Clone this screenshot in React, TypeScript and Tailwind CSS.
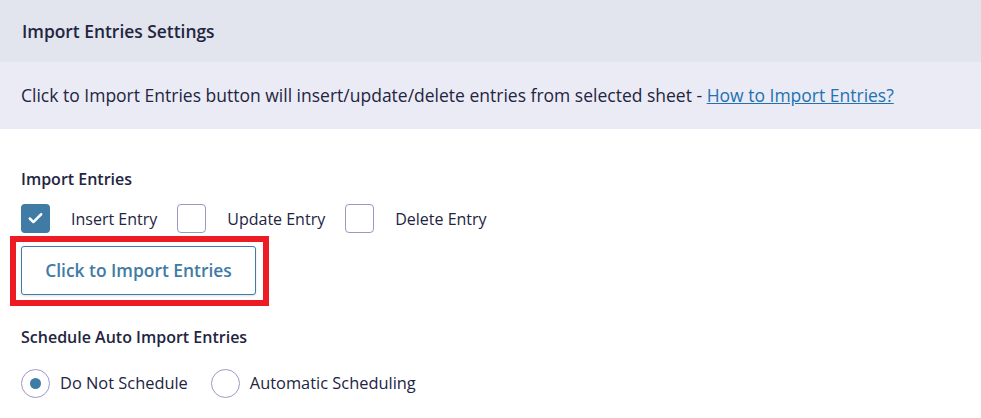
import { Check } from "lucide-react"

const font = { fontFamily: '"Open Sans", "Noto Sans", Arial, sans-serif' }

const Box = ({ checked, label }: { checked?: boolean; label: string }) => (
  <label className="flex items-center">
    <span
      className={
        checked
          ? "flex h-[29px] w-[29px] items-center justify-center rounded-[4px] bg-[#3f7ba4]"
          : "h-[29px] w-[29px] rounded-[4px] border border-[#9a9ac0] bg-white"
      }
    >
      {checked && <Check className="h-[17px] w-[17px] text-white" strokeWidth={3.5} />}
    </span>
    <span className="ml-[21px] mr-[20px] text-[16px] text-[#23253f]">{label}</span>
  </label>
)

const Radio = ({ checked, label }: { checked?: boolean; label: string }) => (
  <label className="flex items-center">
    <span className="flex h-[29px] w-[29px] items-center justify-center rounded-full border border-[#9a9ac0] bg-white">
      {checked && <span className="h-[11px] w-[11px] rounded-full bg-[#3f7ba4]" />}
    </span>
    <span className="ml-[10px] mr-[23px] text-[16.4px] text-[#23253f]">{label}</span>
  </label>
)

export default function App() {
  return (
    <div className="h-[418px] w-[981px] overflow-hidden bg-white" style={font}>
      <div className="flex h-[62px] items-center bg-[#e2e4ee] px-[22px]">
        <h2 className="text-[17.4px] font-semibold text-[#23253f]">Import Entries Settings</h2>
      </div>
      <div className="flex h-[67px] items-center bg-[#ebebf6] px-[21px]">
        <p className="text-[17.5px] text-[#23253f]">
          Click to Import Entries button will insert/update/delete entries from selected sheet -{" "}
          <a href="#" className="text-[#2271b1] underline">
            How to Import Entries?
          </a>
        </p>
      </div>

      <div className="px-[21px] pt-[39px]">
        <h3 className="text-[16px] leading-[22px] font-semibold text-[#23253f]">Import Entries</h3>
        <div className="mt-[14px] flex items-center">
          <Box checked label="Insert Entry" />
          <Box label="Update Entry" />
          <Box label="Delete Entry" />
        </div>

        <div className="relative mt-[13px] w-[235px]">
          <button className="h-[49px] w-[235px] rounded-[3px] border border-[#3f7ba4] bg-white text-[17.4px] font-semibold text-[#3f7ba4] shadow-sm">
            Click to Import Entries
          </button>
          <div className="pointer-events-none absolute -top-[10px] -right-[13px] -bottom-[11px] -left-[11px] border-[6px] border-[#ed1c24]" />
        </div>

        <h3 className="mt-[31px] text-[16px] leading-[22px] font-semibold text-[#23253f]">
          Schedule Auto Import Entries
        </h3>
        <div className="mt-[21px] flex items-center">
          <Radio checked label="Do Not Schedule" />
          <Radio label="Automatic Scheduling" />
        </div>
      </div>
    </div>
  )
}
